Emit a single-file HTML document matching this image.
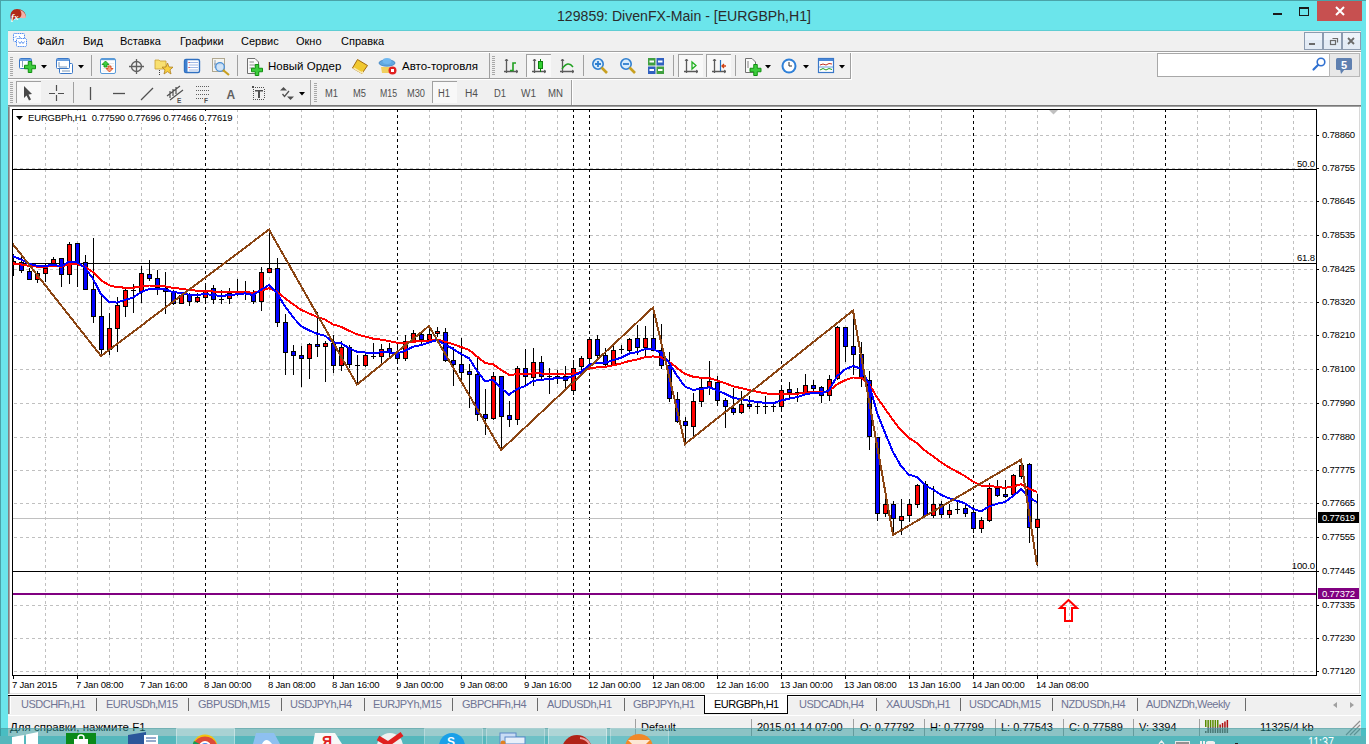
<!DOCTYPE html>
<html><head><meta charset="utf-8">
<style>
*{margin:0;padding:0}
html,body{width:1369px;height:744px;overflow:hidden;background:#fff}
svg{position:absolute;left:0;top:0;display:block}
text{white-space:pre}
</style></head><body>
<svg width="1369" height="744" viewBox="0 0 1369 744" font-family="Liberation Sans, sans-serif">
<rect x="0" y="0" width="1366" height="744" fill="#6be5eb"/>
<rect x="0" y="0" width="1366" height="1" fill="#4aa3a8"/>
<rect x="0" y="0" width="1" height="744" fill="#4aa3a8"/>
<path d="M10.5 17 C10 12 13 9 17 9 C22 9 26 12 26 17 C24 18 21 17.5 18 18 C15 18.5 13 20 12 21 C11 20 10.6 18.5 10.5 17Z" fill="#b02a18"/>
<path d="M20 10 C23 11 26 13.5 26 17.5 C24.5 18.5 22 18 19.5 18 C22 16 22 13 20 10Z" fill="#f0b0a8"/>
<text x="11" y="20" font-size="9" font-style="italic" font-weight="bold" fill="#fff" font-family="Liberation Serif, serif">fx</text>
<text x="557" y="21" font-size="15.5" fill="#2b2b2b" textLength="254" lengthAdjust="spacingAndGlyphs">129859: DivenFX-Main - [EURGBPh,H1]</text>
<rect x="1273" y="13" width="9" height="2" fill="#1a1a1a"/>
<rect x="1299.5" y="7.5" width="9" height="8" fill="none" stroke="#1a1a1a" stroke-width="1"/><rect x="1299" y="7" width="10" height="2" fill="#1a1a1a"/>
<rect x="1317" y="1" width="45" height="20" fill="#c75050"/>
<path d="M1336 7 L1344 15 M1344 7 L1336 15" stroke="#fff" stroke-width="2"/>
<rect x="8" y="31" width="1353" height="20" fill="#f0f0f0"/>
<rect x="8" y="30" width="1353" height="1" fill="#5fcdd3"/>
<g fill="#fff" stroke="#4a88f0" stroke-width="1" stroke-dasharray="1.2 0.6"><rect x="13.5" y="33.5" width="11" height="8" rx="1"/><rect x="16.5" y="38.5" width="10" height="8" rx="1"/></g>
<path d="M15 37.5 l1.5 -1.5 M19 36 l1.5 2 M18.5 41.5 l1.5 2 l1.5 -2 l1.5 2 l1.5 -2" stroke="#4a88f0" fill="none" stroke-width="0.9"/>
<g font-size="11" fill="#000">
<text x="37" y="45">Файл</text>
<text x="83" y="45">Вид</text>
<text x="120" y="45">Вставка</text>
<text x="180" y="45">Графики</text>
<text x="241" y="45">Сервис</text>
<text x="296" y="45">Окно</text>
<text x="341" y="45">Справка</text>
</g>
<rect x="1304.5" y="32.5" width="18" height="17" fill="#e3ebf5" stroke="#8c9bb0" stroke-width="1"/>
<rect x="1305" y="33" width="17" height="7" fill="#eef3fa"/>
<rect x="1323.5" y="32.5" width="18" height="17" fill="#e3ebf5" stroke="#8c9bb0" stroke-width="1"/>
<rect x="1324" y="33" width="17" height="7" fill="#eef3fa"/>
<rect x="1342.5" y="32.5" width="18" height="17" fill="#e3ebf5" stroke="#8c9bb0" stroke-width="1"/>
<rect x="1343" y="33" width="17" height="7" fill="#eef3fa"/>
<rect x="1309" y="43" width="6" height="2" fill="#6a6a6a"/>
<rect x="1330.5" y="40.5" width="5" height="4" fill="none" stroke="#6a6a6a" stroke-width="1.2"/><path d="M1332.5 38.5 H1337.5 V42.5" fill="none" stroke="#6a6a6a" stroke-width="1.2"/>
<path d="M1348 38 L1354 44 M1354 38 L1348 44" stroke="#6a6a6a" stroke-width="1.8"/>
<rect x="8" y="51" width="1353" height="1" fill="#a0a0a0"/>
<rect x="8" y="52" width="1353" height="53" fill="#f0f0f0"/>
<rect x="8" y="52" width="1353" height="1" fill="#ffffff"/>
<rect x="8" y="78" width="843" height="1" fill="#a0a0a0"/>
<rect x="8" y="79" width="844" height="1" fill="#ffffff"/>
<rect x="851" y="53" width="1" height="26" fill="#ffffff"/>
<rect x="489" y="53" width="1" height="25" fill="#a0a0a0"/>
<rect x="850" y="53" width="1" height="25" fill="#a0a0a0"/>
<rect x="310" y="80" width="1" height="25" fill="#a0a0a0"/>
<rect x="571" y="80" width="1" height="25" fill="#a0a0a0"/><rect x="572" y="80" width="1" height="25" fill="#fff"/>
<rect x="8" y="105" width="1353" height="1" fill="#787878"/>
<rect x="8" y="106" width="1353" height="1" fill="#a0a0a0"/>
<rect x="8" y="107" width="1353" height="588" fill="#fff"/>
<rect x="8" y="107" width="1" height="587" fill="#808080"/><rect x="9" y="107" width="1" height="587" fill="#a8a8a8"/>
<rect x="1359" y="107" width="1" height="588" fill="#d8d8d8"/>
<rect x="10" y="57" width="3" height="1" fill="#a8a8a8"/><rect x="10" y="59" width="3" height="1" fill="#a8a8a8"/><rect x="10" y="61" width="3" height="1" fill="#a8a8a8"/><rect x="10" y="63" width="3" height="1" fill="#a8a8a8"/><rect x="10" y="65" width="3" height="1" fill="#a8a8a8"/><rect x="10" y="67" width="3" height="1" fill="#a8a8a8"/><rect x="10" y="69" width="3" height="1" fill="#a8a8a8"/><rect x="10" y="71" width="3" height="1" fill="#a8a8a8"/><rect x="10" y="73" width="3" height="1" fill="#a8a8a8"/><rect x="10" y="75" width="3" height="1" fill="#a8a8a8"/>
<rect x="19.5" y="58.5" width="12" height="10" rx="1" fill="#fff" stroke="#3a78c8" stroke-width="1"/><rect x="20" y="59" width="11" height="2" fill="#6aa0e0"/>
<path d="M22.5 61 V67" stroke="#8aa0b8" stroke-width="1"/>
<path d="M28.25 61.5 H31.75 V65.25 H35.5 V68.75 H31.75 V72.5 H28.25 V68.75 H24.5 V65.25 H28.25 Z" fill="#3ccc3c" stroke="#109010" stroke-width="1"/>
<path d="M41 65 H47 L44 68.5 Z" fill="#000"/>
<rect x="59.5" y="63.5" width="13" height="10" rx="1" fill="#fff" stroke="#3a78c8" stroke-width="1"/>
<rect x="56.5" y="58.5" width="13" height="10" rx="1" fill="#fff" stroke="#3a78c8" stroke-width="1"/><rect x="57" y="59" width="12" height="2" fill="#6aa0e0"/>
<path d="M59 62 V67 H67 M62 71 H70" stroke="#7a98b8" stroke-width="1" fill="none"/>
<path d="M78 65 H84 L81 68.5 Z" fill="#000"/>
<rect x="91" y="55" width="1" height="21" fill="#a0a0a0"/>
<rect x="100.5" y="58.5" width="15" height="15" rx="1.5" fill="#fff" stroke="#5a9ad8" stroke-width="1"/><rect x="101" y="59" width="14" height="1.2" fill="#5a9ad8"/>
<path d="M102.5 63.5 H114 M102.5 66 H114 M102.5 68.5 H108 M102.5 71 H108" stroke="#e4e4e4" stroke-width="0.8"/>
<path d="M102 64.5 L105.5 61 L109 64.5 H107 V67 H104 V64.5 Z" fill="#40d040" stroke="#109010" stroke-width="0.8"/>
<path d="M106 68.5 L109.5 72 L113 68.5 H111 V66 H108 V68.5 Z" fill="#f8a080" stroke="#d04010" stroke-width="0.8"/>
<circle cx="136.5" cy="66.5" r="5" fill="none" stroke="#606060" stroke-width="1.3"/><path d="M136.5 59 V74 M129 66.5 H144" stroke="#606060" stroke-width="1.3"/>
<path d="M155 60 H159 L160 61 H166 V69 H155 Z" fill="#f8e070" stroke="#c8a030" stroke-width="0.8"/>
<path d="M167.5 63 L169 67 L173 67.2 L170 69.8 L171 74 L167.5 71.6 L164 74 L165 69.8 L162 67.2 L166 67 Z" fill="#f8d040" stroke="#b08020" stroke-width="0.8"/>
<path d="M159.5 70 V75" stroke="#404040" stroke-width="1" stroke-dasharray="1 1"/>
<rect x="184.5" y="59.5" width="15" height="13" rx="1.5" fill="#fff" stroke="#3070c0" stroke-width="1.4"/><rect x="185" y="60" width="2.5" height="12" fill="#4080d0"/>
<path d="M189 62.5 H198 M189 65 H198 M189 67.5 H198 M189 70 H198" stroke="#8aa8e0" stroke-width="0.8"/>
<path d="M188.5 62.5 h1 M188.5 67.5 h1" stroke="#e02020" stroke-width="1"/>
<rect x="212.5" y="58.5" width="12" height="13" fill="#f4f4f0" stroke="#b0a890" stroke-width="1"/>
<path d="M215 60 V68 M214 64 H223" stroke="#8090a0" stroke-width="0.8"/>
<circle cx="220" cy="67" r="4.3" fill="#c8e0f8" fill-opacity="0.8" stroke="#4a90d8" stroke-width="1.3"/><path d="M223 70 L229 75" stroke="#c8a020" stroke-width="2.2"/>
<rect x="237" y="55" width="1" height="21" fill="#a0a0a0"/>
<path d="M247.5 58.5 H255 L258.5 62 V73.5 H247.5 Z" fill="#fafafa" stroke="#707070" stroke-width="1"/>
<path d="M249.5 62 H254 M249.5 65 H256 M249.5 68 H254" stroke="#909090" stroke-width="1"/>
<path d="M255.25 64.5 H258.75 V68.25 H262.5 V71.75 H258.75 V75.5 H255.25 V71.75 H251.5 V68.25 H255.25 Z" fill="#3ccc3c" stroke="#109010" stroke-width="1"/>
<text x="268" y="70" font-size="11.5" fill="#000">Новый Ордер</text>
<path d="M357.5 59.5 L367.5 65.5 L362 73.5 L352.5 68 Z" fill="#f0c830" stroke="#a06810" stroke-width="1"/>
<path d="M353.5 68 L362 73 L363 71.5" fill="none" stroke="#f8e8b0" stroke-width="1.5"/>
<path d="M381 67 L394 67 L393 73 L382 73 Z" fill="#f0d060"/>
<ellipse cx="387" cy="63" rx="8" ry="3.2" fill="#60a8e0" stroke="#3a80c0" stroke-width="0.8"/><ellipse cx="387" cy="61" rx="4.5" ry="3" fill="#70b8f0"/>
<circle cx="392.5" cy="70.5" r="4" fill="#e02020"/><rect x="391" y="69" width="3" height="3" fill="#fff"/>
<text x="402" y="70" font-size="11.5" fill="#000">Авто-торговля</text>
<rect x="492" y="56" width="3" height="1" fill="#a8a8a8"/><rect x="492" y="58" width="3" height="1" fill="#a8a8a8"/><rect x="492" y="60" width="3" height="1" fill="#a8a8a8"/><rect x="492" y="62" width="3" height="1" fill="#a8a8a8"/><rect x="492" y="64" width="3" height="1" fill="#a8a8a8"/><rect x="492" y="66" width="3" height="1" fill="#a8a8a8"/><rect x="492" y="68" width="3" height="1" fill="#a8a8a8"/><rect x="492" y="70" width="3" height="1" fill="#a8a8a8"/><rect x="492" y="72" width="3" height="1" fill="#a8a8a8"/><rect x="492" y="74" width="3" height="1" fill="#a8a8a8"/>
<path d="M506.5 59 V73 M504 71.5 H518" stroke="#5a5a5a" stroke-width="1.3" fill="none"/><path d="M505 61 L506.5 59 L508 61 M516 70 L518 71.5 L516 73" stroke="#5a5a5a" stroke-width="1" fill="none"/>
<path d="M510 70.5 H513 V63 H516" stroke="#20a020" stroke-width="1.6" fill="none"/>
<rect x="526" y="54" width="25" height="23" fill="#f8f8f8"/><rect x="526" y="54" width="25" height="1" fill="#a0a0a0"/><rect x="526" y="54" width="1" height="23" fill="#a0a0a0"/>
<path d="M534.5 59 V73 M532 71.5 H546" stroke="#5a5a5a" stroke-width="1.3" fill="none"/><path d="M533 61 L534.5 59 L536 61 M544 70 L546 71.5 L544 73" stroke="#5a5a5a" stroke-width="1" fill="none"/>
<path d="M540.5 59 V72" stroke="#108010" stroke-width="1"/><rect x="538.5" y="61.5" width="4" height="7" fill="#30d030" stroke="#108010" stroke-width="1"/>
<path d="M562.5 59 V73 M560 71.5 H574" stroke="#5a5a5a" stroke-width="1.3" fill="none"/><path d="M561 61 L562.5 59 L564 61 M572 70 L574 71.5 L572 73" stroke="#5a5a5a" stroke-width="1" fill="none"/>
<path d="M562 69 Q568 60 573 67" stroke="#20a020" stroke-width="1.4" fill="none"/>
<rect x="583" y="55" width="1" height="21" fill="#a0a0a0"/>
<circle cx="598" cy="64" r="5.2" fill="#d8ecfb" stroke="#2f7fd0" stroke-width="1.6"/><path d="M601.5 67.5 L607 73" stroke="#c8a020" stroke-width="2.6"/><path d="M595 64 H601 M598 61 V67" stroke="#2f7fd0" stroke-width="1.8"/>
<circle cx="626" cy="64" r="5.2" fill="#d8ecfb" stroke="#2f7fd0" stroke-width="1.6"/><path d="M629.5 67.5 L635 73" stroke="#c8a020" stroke-width="2.6"/><path d="M623 64 H629" stroke="#2f7fd0" stroke-width="1.8"/>
<rect x="648" y="58" width="7.5" height="7.5" fill="#40a040"/><rect x="656.5" y="58" width="7.5" height="7.5" fill="#3060c0"/><rect x="648" y="66.5" width="7.5" height="7.5" fill="#3060c0"/><rect x="656.5" y="66.5" width="7.5" height="7.5" fill="#40a040"/>
<path d="M649.5 61.5 h4.5 M658 61.5 h4.5 M649.5 70 h4.5 M658 70 h4.5" stroke="#fff" stroke-width="2"/>
<rect x="673" y="55" width="1" height="21" fill="#a0a0a0"/>
<rect x="678" y="54" width="25" height="23" fill="#f8f8f8"/><rect x="678" y="54" width="25" height="1" fill="#a0a0a0"/><rect x="678" y="54" width="1" height="23" fill="#a0a0a0"/>
<path d="M686.5 59 V73 M684 71.5 H698" stroke="#5a5a5a" stroke-width="1.3" fill="none"/><path d="M685 61 L686.5 59 L688 61 M696 70 L698 71.5 L696 73" stroke="#5a5a5a" stroke-width="1" fill="none"/>
<path d="M692 62 L696 65.5 L692 69 Z" fill="none" stroke="#20b020" stroke-width="1.3"/>
<rect x="706" y="54" width="25" height="23" fill="#f8f8f8"/><rect x="706" y="54" width="25" height="1" fill="#a0a0a0"/><rect x="706" y="54" width="1" height="23" fill="#a0a0a0"/>
<path d="M714.5 59 V73 M712 71.5 H726" stroke="#5a5a5a" stroke-width="1.3" fill="none"/><path d="M713 61 L714.5 59 L716 61 M724 70 L726 71.5 L724 73" stroke="#5a5a5a" stroke-width="1" fill="none"/>
<path d="M720.5 60 V71" stroke="#2070c0" stroke-width="1.2"/><path d="M726 66 H722 M724 64 L722 66 L724 68" stroke="#d04010" stroke-width="1.3" fill="none"/>
<rect x="735" y="55" width="1" height="21" fill="#a0a0a0"/>
<path d="M745.5 58.5 H752 L755.5 62 V72.5 H745.5 Z" fill="#fafafa" stroke="#707070" stroke-width="1"/>
<path d="M748 61 V68" stroke="#606060" stroke-width="0.8"/>
<path d="M753.75 64.5 H757.25 V68.25 H761.0 V71.75 H757.25 V75.5 H753.75 V71.75 H750.0 V68.25 H753.75 Z" fill="#3ccc3c" stroke="#109010" stroke-width="1"/>
<path d="M765 65 H771 L768 68.5 Z" fill="#000"/>
<circle cx="789" cy="66" r="7.5" fill="#2f80d8"/><circle cx="789" cy="66" r="5.5" fill="#fff"/><path d="M789 62 V66 H792" stroke="#303030" stroke-width="1" fill="none"/>
<path d="M803 65 H809 L806 68.5 Z" fill="#000"/>
<rect x="818.5" y="58.5" width="15" height="14" fill="#fff" stroke="#3a78c8" stroke-width="1.2"/><rect x="819" y="59" width="14" height="2" fill="#4a88d8"/>
<path d="M820 65 l3 -1 l3 1 l3 -1.5 l3 0.5" stroke="#c03020" stroke-width="1" fill="none"/><path d="M820 70 l3 -1.5 l3 1.5 l3 -1.5 l3 1" stroke="#20a020" stroke-width="1" fill="none"/><path d="M819 67 H833" stroke="#4a88d8" stroke-width="0.8"/>
<path d="M839 65 H845 L842 68.5 Z" fill="#000"/>
<rect x="10" y="82" width="3" height="1" fill="#a8a8a8"/><rect x="10" y="84" width="3" height="1" fill="#a8a8a8"/><rect x="10" y="86" width="3" height="1" fill="#a8a8a8"/><rect x="10" y="88" width="3" height="1" fill="#a8a8a8"/><rect x="10" y="90" width="3" height="1" fill="#a8a8a8"/><rect x="10" y="92" width="3" height="1" fill="#a8a8a8"/><rect x="10" y="94" width="3" height="1" fill="#a8a8a8"/><rect x="10" y="96" width="3" height="1" fill="#a8a8a8"/><rect x="10" y="98" width="3" height="1" fill="#a8a8a8"/><rect x="10" y="100" width="3" height="1" fill="#a8a8a8"/><rect x="10" y="102" width="3" height="1" fill="#a8a8a8"/>
<rect x="16" y="81" width="25" height="22" fill="#f8f8f8"/><rect x="16" y="81" width="25" height="1" fill="#a0a0a0"/><rect x="16" y="81" width="1" height="22" fill="#a0a0a0"/>
<path d="M24 86 L32 94 L28.5 94.5 L31 99.5 L29 100.5 L26.5 95.5 L24 98 Z" fill="#484848"/>
<path d="M56.5 85 V91 M56.5 95 V101 M49 93.5 H55 M58 93.5 H64" stroke="#505050" stroke-width="1.2"/>
<rect x="73" y="82" width="1" height="21" fill="#a0a0a0"/>
<path d="M90.5 87 V100" stroke="#505050" stroke-width="1.3"/>
<path d="M113 93.5 H125" stroke="#505050" stroke-width="1.3"/>
<path d="M141 100 L153 88" stroke="#505050" stroke-width="1.3"/>
<path d="M167 96 L180 86 M170 100 L183 90 M170 91 V98 M173 89 V96 M176 87 V94" stroke="#505050" stroke-width="1.2"/>
<text x="177" y="103" font-size="6.5" font-weight="bold" fill="#505050">E</text>
<path d="M196 86.5 H210 M196 90.5 H210 M196 94.5 H210 M196 98.5 H203" stroke="#606060" stroke-width="1" stroke-dasharray="1 1"/>
<text x="204" y="103" font-size="6.5" font-weight="bold" fill="#505050">F</text>
<text x="226.5" y="98.5" font-size="12" font-weight="bold" fill="#606060">A</text>
<g fill="#505050"><rect x="253" y="87" width="1" height="1"/><rect x="253" y="99" width="1" height="1"/><rect x="255" y="87" width="1" height="1"/><rect x="255" y="99" width="1" height="1"/><rect x="257" y="87" width="1" height="1"/><rect x="257" y="99" width="1" height="1"/><rect x="259" y="87" width="1" height="1"/><rect x="259" y="99" width="1" height="1"/><rect x="261" y="87" width="1" height="1"/><rect x="261" y="99" width="1" height="1"/><rect x="263" y="87" width="1" height="1"/><rect x="263" y="99" width="1" height="1"/><rect x="253" y="89" width="1" height="1"/><rect x="264" y="89" width="1" height="1"/><rect x="253" y="91" width="1" height="1"/><rect x="264" y="91" width="1" height="1"/><rect x="253" y="93" width="1" height="1"/><rect x="264" y="93" width="1" height="1"/><rect x="253" y="95" width="1" height="1"/><rect x="264" y="95" width="1" height="1"/><rect x="253" y="97" width="1" height="1"/><rect x="264" y="97" width="1" height="1"/><rect x="252" y="86" width="2" height="2"/><rect x="255" y="90" width="8" height="1.5"/><rect x="258" y="90" width="2" height="8"/></g>
<path d="M280 90.5 L283.5 87 L287 90.5 Z M287 96.5 L290.5 100 L294 96.5 Z" fill="#505050"/><path d="M282.5 94 L284.5 96.5 L289 91" stroke="#505050" stroke-width="1.3" fill="none"/>
<path d="M299 92 H305 L302 95.5 Z" fill="#000"/>
<rect x="314" y="83" width="3" height="1" fill="#a8a8a8"/><rect x="314" y="85" width="3" height="1" fill="#a8a8a8"/><rect x="314" y="87" width="3" height="1" fill="#a8a8a8"/><rect x="314" y="89" width="3" height="1" fill="#a8a8a8"/><rect x="314" y="91" width="3" height="1" fill="#a8a8a8"/><rect x="314" y="93" width="3" height="1" fill="#a8a8a8"/><rect x="314" y="95" width="3" height="1" fill="#a8a8a8"/><rect x="314" y="97" width="3" height="1" fill="#a8a8a8"/><rect x="314" y="99" width="3" height="1" fill="#a8a8a8"/><rect x="314" y="101" width="3" height="1" fill="#a8a8a8"/>
<g font-size="10" fill="#505050">
<rect x="432" y="81" width="25" height="22" fill="#f8f8f8"/><rect x="432" y="81" width="25" height="1" fill="#a0a0a0"/><rect x="432" y="81" width="1" height="22" fill="#a0a0a0"/>
<text x="325" y="97" textLength="13" lengthAdjust="spacingAndGlyphs">M1</text>
<text x="353" y="97" textLength="13" lengthAdjust="spacingAndGlyphs">M5</text>
<text x="380" y="97" textLength="17" lengthAdjust="spacingAndGlyphs">M15</text>
<text x="407" y="97" textLength="18" lengthAdjust="spacingAndGlyphs">M30</text>
<text x="438" y="97" textLength="12" lengthAdjust="spacingAndGlyphs">H1</text>
<text x="465" y="97" textLength="13" lengthAdjust="spacingAndGlyphs">H4</text>
<text x="494" y="97" textLength="12" lengthAdjust="spacingAndGlyphs">D1</text>
<text x="521" y="97" textLength="15" lengthAdjust="spacingAndGlyphs">W1</text>
<text x="548" y="97" textLength="15" lengthAdjust="spacingAndGlyphs">MN</text>
</g>
<rect x="1157.5" y="53.5" width="172" height="23" fill="#fff" stroke="#a8a8a8" stroke-width="1"/>
<circle cx="1321" cy="62" r="3.8" fill="none" stroke="#3070d0" stroke-width="1.6"/><path d="M1318 65 L1313.5 69.5" stroke="#3070d0" stroke-width="2.2" stroke-linecap="round"/>
<rect x="1329.5" y="53.5" width="30" height="23" fill="#e8e8e8" stroke="#b8b8b8" stroke-width="1"/>
<rect x="1336" y="58" width="16" height="12" rx="1.5" fill="#5f80b0"/><path d="M1340 69 L1341 74 L1345 69 Z" fill="#5f80b0"/>
<text x="1341" y="68.5" font-size="11" font-weight="bold" fill="#fff">5</text>
<g shape-rendering="crispEdges">
<path d="M45.5 109V675 M77.5 109V675 M109.5 109V675 M141.5 109V675 M173.5 109V675 M237.5 109V675 M269.5 109V675 M301.5 109V675 M333.5 109V675 M365.5 109V675 M429.5 109V675 M461.5 109V675 M493.5 109V675 M525.5 109V675 M557.5 109V675 M621.5 109V675 M653.5 109V675 M685.5 109V675 M717.5 109V675 M749.5 109V675 M813.5 109V675 M845.5 109V675 M877.5 109V675 M909.5 109V675 M941.5 109V675 M1005.5 109V675 M1037.5 109V675 M1069.5 109V675 M1101.5 109V675 M1133.5 109V675 M1197.5 109V675 M1229.5 109V675 M1261.5 109V675 M1293.5 109V675 M14 135.5H1316 M14 168.5H1316 M14 201.5H1316 M14 235.5H1316 M14 269.5H1316 M14 302.5H1316 M14 335.5H1316 M14 369.5H1316 M14 403.5H1316 M14 437.5H1316 M14 470.5H1316 M14 503.5H1316 M14 537.5H1316 M14 571.5H1316 M14 605.5H1316 M14 638.5H1316 M14 671.5H1316" stroke="#c0c0c0" stroke-width="1" stroke-dasharray="3 3" fill="none"/>
<path d="M205.5 109V675 M397.5 109V675 M573.5 109V675 M589.5 109V675 M781.5 109V675 M973.5 109V675 M1165.5 109V675" stroke="#000" stroke-width="1" stroke-dasharray="3 3" fill="none"/>
<path d="M12 169.5H1316 M12 263.5H1316 M12 571.5H1316" stroke="#000" stroke-width="1"/>
<path d="M12 518.5H1316" stroke="#c0c0c0" stroke-width="1"/>
<rect x="12" y="593" width="1304" height="2" fill="#800080"/>
</g>
<g font-size="9.5" fill="#000" text-anchor="end" style="letter-spacing:-0.1px">
<text x="1315" y="167">50.0</text><text x="1315" y="261">61.8</text><text x="1315" y="569">100.0</text>
</g>
<defs><clipPath id="pc"><rect x="13" y="110" width="1303" height="565"/></clipPath></defs>
<g clip-path="url(#pc)">
<g shape-rendering="crispEdges">
<path d="M13.5 254V261 M13.5 265V276 M21.5 256V262 M21.5 271V273 M29.5 268V271 M37.5 271V273 M37.5 280V283 M45.5 263V268 M45.5 274V282 M53.5 257V259 M53.5 264V265 M61.5 275V287 M69.5 242V244 M69.5 275V284 M77.5 264V287 M85.5 255V262 M93.5 238V289 M93.5 317V323 M101.5 296V316 M101.5 350V355 M109.5 313V328 M109.5 350V355 M117.5 297V305 M117.5 329V352 M125.5 287V290 M125.5 307V317 M133.5 284V290 M133.5 291V313 M141.5 266V273 M141.5 292V303 M149.5 260V274 M149.5 279V281 M157.5 270V278 M157.5 288V295 M165.5 272V288 M165.5 292V314 M173.5 290V291 M173.5 304V305 M189.5 293V295 M189.5 302V306 M197.5 293V297 M197.5 302V303 M205.5 283V290 M205.5 298V302 M213.5 285V288 M213.5 300V304 M221.5 290V299 M221.5 300V304 M229.5 288V293 M229.5 299V304 M237.5 279V291 M237.5 292V296 M245.5 281V291 M245.5 292V300 M253.5 290V293 M253.5 302V304 M261.5 267V272 M261.5 302V311 M269.5 230V268 M277.5 258V268 M277.5 323V327 M285.5 314V322 M285.5 353V375 M293.5 345V351 M293.5 356V375 M301.5 346V355 M301.5 359V387 M309.5 343V344 M309.5 359V379 M317.5 312V344 M317.5 347V357 M325.5 341V343 M325.5 347V382 M333.5 335V343 M333.5 366V373 M341.5 341V347 M341.5 366V371 M349.5 345V347 M349.5 365V368 M357.5 355V365 M357.5 366V385 M365.5 352V355 M365.5 366V367 M373.5 343V356 M373.5 357V359 M381.5 344V349 M381.5 357V365 M389.5 343V348 M389.5 353V358 M397.5 345V352 M397.5 359V364 M405.5 335V341 M405.5 359V361 M413.5 330V333 M413.5 342V343 M421.5 333V334 M421.5 340V344 M429.5 329V334 M429.5 340V343 M437.5 327V331 M437.5 334V337 M445.5 328V332 M445.5 361V362 M453.5 347V360 M453.5 365V386 M461.5 338V364 M461.5 373V381 M469.5 364V371 M469.5 375V408 M477.5 358V374 M477.5 415V421 M485.5 389V414 M485.5 419V435 M493.5 372V376 M493.5 419V420 M501.5 417V451 M509.5 401V415 M509.5 420V427 M517.5 366V368 M517.5 420V425 M525.5 349V368 M525.5 377V386 M533.5 348V362 M533.5 378V386 M541.5 356V362 M541.5 377V380 M549.5 368V376 M549.5 377V394 M557.5 370V376 M557.5 377V384 M565.5 366V376 M565.5 381V390 M573.5 360V368 M573.5 391V395 M581.5 356V358 M581.5 367V371 M589.5 337V339 M589.5 359V365 M597.5 335V339 M597.5 356V359 M605.5 348V355 M605.5 365V367 M613.5 346V350 M621.5 345V349 M621.5 350V354 M629.5 338V339 M629.5 351V352 M637.5 325V338 M637.5 348V355 M645.5 326V338 M645.5 348V356 M653.5 308V338 M661.5 324V350 M661.5 366V369 M669.5 352V365 M669.5 399V402 M677.5 392V399 M677.5 422V423 M685.5 417V421 M685.5 426V445 M693.5 393V401 M693.5 427V437 M701.5 379V387 M701.5 402V407 M709.5 361V381 M709.5 388V395 M717.5 376V382 M717.5 401V406 M725.5 398V400 M725.5 407V428 M733.5 388V408 M733.5 413V415 M741.5 391V404 M741.5 413V414 M749.5 396V404 M749.5 407V409 M757.5 403V406 M757.5 407V414 M765.5 396V406 M765.5 407V414 M773.5 403V406 M773.5 407V412 M781.5 386V390 M781.5 407V409 M789.5 382V389 M789.5 393V398 M797.5 388V392 M797.5 393V402 M805.5 374V385 M805.5 393V394 M813.5 380V385 M813.5 389V392 M821.5 386V387 M821.5 396V403 M829.5 375V379 M829.5 396V401 M837.5 326V327 M837.5 379V380 M845.5 347V362 M853.5 311V346 M853.5 355V375 M861.5 342V354 M861.5 379V387 M869.5 371V380 M869.5 437V450 M877.5 514V521 M885.5 497V504 M885.5 514V517 M893.5 501V504 M893.5 519V536 M901.5 499V516 M901.5 521V535 M909.5 499V504 M909.5 516V522 M917.5 484V485 M917.5 505V508 M925.5 481V484 M925.5 516V517 M933.5 486V504 M933.5 516V518 M941.5 501V504 M941.5 515V518 M949.5 504V510 M949.5 515V518 M957.5 502V509 M957.5 510V514 M965.5 504V508 M965.5 514V517 M973.5 506V512 M973.5 529V533 M981.5 517V520 M981.5 529V533 M989.5 483V488 M989.5 521V522 M997.5 480V488 M997.5 496V497 M1005.5 480V494 M1005.5 497V498 M1013.5 474V475 M1013.5 495V496 M1021.5 460V465 M1021.5 477V479 M1029.5 463V464 M1029.5 528V543 M1037.5 494V519 M1037.5 528V566 M131 290.5H136 M219 299.5H224 M235 291.5H240 M243 291.5H248 M355 365.5H360 M371 356.5H376 M547 376.5H552 M555 376.5H560 M619 349.5H624 M755 406.5H760 M763 406.5H768 M771 406.5H776 M795 392.5H800 M955 509.5H960" stroke="#000" stroke-width="1" fill="none"/>
<g fill="#ff0000" stroke="#000" stroke-width="1"><rect x="11.5" y="261.5" width="4" height="3" /><rect x="35.5" y="273.5" width="4" height="6" /><rect x="43.5" y="268.5" width="4" height="5" /><rect x="51.5" y="259.5" width="4" height="4" /><rect x="67.5" y="244.5" width="4" height="30" /><rect x="107.5" y="328.5" width="4" height="21" /><rect x="115.5" y="305.5" width="4" height="23" /><rect x="123.5" y="290.5" width="4" height="16" /><rect x="139.5" y="273.5" width="4" height="18" /><rect x="179.5" y="295.5" width="4" height="8" /><rect x="195.5" y="297.5" width="4" height="4" /><rect x="203.5" y="290.5" width="4" height="7" /><rect x="227.5" y="293.5" width="4" height="5" /><rect x="259.5" y="272.5" width="4" height="29" /><rect x="267.5" y="268.5" width="4" height="4" /><rect x="307.5" y="344.5" width="4" height="14" /><rect x="323.5" y="343.5" width="4" height="3" /><rect x="339.5" y="347.5" width="4" height="18" /><rect x="363.5" y="355.5" width="4" height="10" /><rect x="379.5" y="349.5" width="4" height="7" /><rect x="403.5" y="341.5" width="4" height="17" /><rect x="411.5" y="333.5" width="4" height="8" /><rect x="427.5" y="334.5" width="4" height="5" /><rect x="435.5" y="331.5" width="4" height="2" /><rect x="491.5" y="376.5" width="4" height="42" /><rect x="515.5" y="368.5" width="4" height="51" /><rect x="531.5" y="362.5" width="4" height="15" /><rect x="571.5" y="368.5" width="4" height="22" /><rect x="579.5" y="358.5" width="4" height="8" /><rect x="587.5" y="339.5" width="4" height="19" /><rect x="611.5" y="350.5" width="4" height="14" /><rect x="627.5" y="339.5" width="4" height="11" /><rect x="643.5" y="338.5" width="4" height="9" /><rect x="691.5" y="401.5" width="4" height="25" /><rect x="699.5" y="387.5" width="4" height="14" /><rect x="707.5" y="381.5" width="4" height="6" /><rect x="739.5" y="404.5" width="4" height="8" /><rect x="779.5" y="390.5" width="4" height="16" /><rect x="803.5" y="385.5" width="4" height="7" /><rect x="827.5" y="379.5" width="4" height="16" /><rect x="835.5" y="327.5" width="4" height="51" /><rect x="883.5" y="504.5" width="4" height="9" /><rect x="899.5" y="516.5" width="4" height="4" /><rect x="907.5" y="504.5" width="4" height="11" /><rect x="915.5" y="485.5" width="4" height="19" /><rect x="931.5" y="504.5" width="4" height="11" /><rect x="947.5" y="510.5" width="4" height="4" /><rect x="979.5" y="520.5" width="4" height="8" /><rect x="987.5" y="488.5" width="4" height="32" /><rect x="1011.5" y="475.5" width="4" height="19" /><rect x="1019.5" y="465.5" width="4" height="11" /><rect x="1035.5" y="519.5" width="4" height="8" /></g>
<g fill="#0000ff" stroke="#000" stroke-width="1"><rect x="19.5" y="262.5" width="4" height="8" /><rect x="27.5" y="271.5" width="4" height="8" /><rect x="59.5" y="258.5" width="4" height="16" /><rect x="75.5" y="243.5" width="4" height="20" /><rect x="83.5" y="262.5" width="4" height="27" /><rect x="91.5" y="289.5" width="4" height="27" /><rect x="99.5" y="316.5" width="4" height="33" /><rect x="147.5" y="274.5" width="4" height="4" /><rect x="155.5" y="278.5" width="4" height="9" /><rect x="163.5" y="288.5" width="4" height="3" /><rect x="171.5" y="291.5" width="4" height="12" /><rect x="187.5" y="295.5" width="4" height="6" /><rect x="211.5" y="288.5" width="4" height="11" /><rect x="251.5" y="293.5" width="4" height="8" /><rect x="275.5" y="268.5" width="4" height="54" /><rect x="283.5" y="322.5" width="4" height="30" /><rect x="291.5" y="351.5" width="4" height="4" /><rect x="299.5" y="355.5" width="4" height="3" /><rect x="315.5" y="344.5" width="4" height="2" /><rect x="331.5" y="343.5" width="4" height="22" /><rect x="347.5" y="347.5" width="4" height="17" /><rect x="387.5" y="348.5" width="4" height="4" /><rect x="395.5" y="352.5" width="4" height="6" /><rect x="419.5" y="334.5" width="4" height="5" /><rect x="443.5" y="332.5" width="4" height="28" /><rect x="451.5" y="360.5" width="4" height="4" /><rect x="459.5" y="364.5" width="4" height="8" /><rect x="467.5" y="371.5" width="4" height="3" /><rect x="475.5" y="374.5" width="4" height="40" /><rect x="483.5" y="414.5" width="4" height="4" /><rect x="499.5" y="376.5" width="4" height="40" /><rect x="507.5" y="415.5" width="4" height="4" /><rect x="523.5" y="368.5" width="4" height="8" /><rect x="539.5" y="362.5" width="4" height="14" /><rect x="563.5" y="376.5" width="4" height="4" /><rect x="595.5" y="339.5" width="4" height="16" /><rect x="603.5" y="355.5" width="4" height="9" /><rect x="635.5" y="338.5" width="4" height="9" /><rect x="651.5" y="338.5" width="4" height="12" /><rect x="659.5" y="350.5" width="4" height="15" /><rect x="667.5" y="365.5" width="4" height="33" /><rect x="675.5" y="399.5" width="4" height="22" /><rect x="683.5" y="421.5" width="4" height="4" /><rect x="715.5" y="382.5" width="4" height="18" /><rect x="723.5" y="400.5" width="4" height="6" /><rect x="731.5" y="408.5" width="4" height="4" /><rect x="747.5" y="404.5" width="4" height="2" /><rect x="787.5" y="389.5" width="4" height="3" /><rect x="811.5" y="385.5" width="4" height="3" /><rect x="819.5" y="387.5" width="4" height="8" /><rect x="843.5" y="327.5" width="4" height="19" /><rect x="851.5" y="346.5" width="4" height="8" /><rect x="859.5" y="354.5" width="4" height="24" /><rect x="867.5" y="380.5" width="4" height="56" /><rect x="875.5" y="437.5" width="4" height="76" /><rect x="891.5" y="504.5" width="4" height="14" /><rect x="923.5" y="484.5" width="4" height="31" /><rect x="939.5" y="504.5" width="4" height="10" /><rect x="963.5" y="508.5" width="4" height="5" /><rect x="971.5" y="512.5" width="4" height="16" /><rect x="995.5" y="488.5" width="4" height="7" /><rect x="1003.5" y="494.5" width="4" height="2" /><rect x="1027.5" y="464.5" width="4" height="63" /></g>
</g>
<polyline points="13,263.7 21,264.4 29,265.9 37,266.6 45,266.8 53,265.9 61,266.7 69,264.3 77,264.2 85,266.9 93,272.1 101,280.2 109,285.2 117,287.3 125,287.6 133,287.8 141,286.3 149,285.5 157,285.6 165,286.2 173,288.0 181,288.7 189,290.0 197,290.7 205,290.6 213,291.5 221,292.2 229,292.3 237,292.1 245,292.0 253,292.9 261,290.7 269,288.2 277,291.8 285,298.2 293,304.2 301,309.8 309,313.4 317,316.9 325,319.6 333,324.4 341,326.8 349,330.7 357,334.3 365,336.5 373,338.6 381,339.7 389,341.0 397,342.8 405,342.6 413,341.6 421,341.3 429,340.5 437,339.5 445,341.7 453,344.1 461,347.0 469,349.8 477,356.5 485,363.0 493,364.3 501,369.8 509,374.9 517,374.3 525,374.4 533,373.2 541,373.5 549,373.7 557,373.9 565,374.6 573,373.8 581,372.2 589,368.7 597,367.3 605,367.0 613,365.2 621,363.6 629,361.0 637,359.5 645,357.2 653,356.4 661,357.3 669,361.6 677,367.9 685,373.9 693,376.7 701,377.8 709,378.1 717,380.4 725,383.2 733,386.2 741,388.1 749,390.0 757,391.7 765,393.2 773,394.5 781,394.0 789,393.9 797,393.7 805,392.7 813,392.2 821,392.5 829,391.1 837,384.4 845,380.3 853,377.5 861,377.6 869,383.8 877,397.4 885,408.7 893,420.2 901,430.3 909,438.1 917,443.1 925,450.6 933,456.2 941,462.3 949,467.3 957,471.7 965,476.1 973,481.5 981,485.6 989,485.9 997,486.9 1005,487.8 1013,486.5 1021,484.2 1029,488.7 1037,491.9" fill="none" stroke="#ff0000" stroke-width="2" stroke-linejoin="round" shape-rendering="crispEdges"/>
<polyline points="13,256.3 21,259.5 29,263.7 37,265.8 45,266.2 53,264.6 61,266.6 69,261.6 77,261.9 85,268.0 93,278.8 101,294.4 109,301.9 117,302.6 125,299.8 133,297.6 141,292.1 149,289.1 157,288.6 165,289.2 173,292.2 181,292.8 189,294.7 197,295.2 205,293.9 213,295.1 221,295.9 229,295.2 237,294.2 245,293.4 253,295.0 261,289.9 269,284.9 277,293.2 285,306.3 293,317.2 301,326.1 309,330.2 317,333.7 325,335.8 333,342.3 341,343.3 349,348.0 357,351.8 365,352.5 373,353.3 381,352.3 389,352.3 397,353.5 405,350.7 413,346.8 421,345.1 429,342.6 437,340.0 445,344.5 453,348.9 461,353.9 469,358.3 477,370.7 485,381.2 493,379.9 501,387.9 509,394.8 517,389.0 525,386.1 533,380.9 541,379.8 549,378.9 557,378.2 565,378.6 573,376.1 581,372.2 589,364.8 597,362.7 605,363.0 613,360.2 621,357.8 629,353.6 637,352.2 645,349.0 653,349.1 661,352.7 669,362.7 677,375.7 685,386.6 693,389.8 701,389.1 709,387.3 717,390.1 725,393.8 733,397.8 741,399.1 749,400.8 757,401.9 765,402.8 773,403.5 781,400.5 789,398.7 797,397.2 805,394.4 813,392.9 821,393.5 829,390.3 837,376.2 845,369.5 853,366.0 861,368.7 869,383.8 877,412.5 885,432.9 893,451.9 901,466.2 909,474.7 917,477.0 925,485.4 933,489.5 941,494.9 949,498.3 957,500.7 965,503.4 973,508.9 981,511.5 989,506.4 997,503.8 1005,502.1 1013,496.1 1021,489.2 1029,497.6 1037,502.2" fill="none" stroke="#0000ff" stroke-width="2" stroke-linejoin="round" shape-rendering="crispEdges"/>
<polyline points="12,243 101,356 269,229.6 357,384.6 429,326 501,450 653,307.5 685,444 853,310.6 893,535 1021,459.7 1037,565" fill="none" stroke="#8b4513" stroke-width="2" stroke-linejoin="miter" shape-rendering="crispEdges"/>
</g>
<path d="M1068.5 600 L1077 608 H1072 V621 H1065 V608 H1060 Z" fill="none" stroke="#ff0000" stroke-width="2"/>
<path d="M1049 110 H1058 L1053.5 114.5 Z" fill="#c0c0c0"/>
<rect x="12.5" y="109.5" width="1304" height="566" fill="none" stroke="#000" stroke-width="1" shape-rendering="crispEdges"/>
<path d="M1317 135.5H1319 M1317 168.5H1319 M1317 201.5H1319 M1317 235.5H1319 M1317 269.5H1319 M1317 302.5H1319 M1317 335.5H1319 M1317 369.5H1319 M1317 403.5H1319 M1317 437.5H1319 M1317 470.5H1319 M1317 503.5H1319 M1317 537.5H1319 M1317 571.5H1319 M1317 605.5H1319 M1317 638.5H1319 M1317 671.5H1319" stroke="#000" stroke-width="1" shape-rendering="crispEdges"/>
<g font-size="9.5" fill="#000" style="letter-spacing:-0.2px">
<text x="1322" y="138">0.78860</text>
<text x="1322" y="171">0.78755</text>
<text x="1322" y="204">0.78645</text>
<text x="1322" y="238">0.78535</text>
<text x="1322" y="272">0.78425</text>
<text x="1322" y="305">0.78320</text>
<text x="1322" y="338">0.78210</text>
<text x="1322" y="372">0.78100</text>
<text x="1322" y="406">0.77990</text>
<text x="1322" y="440">0.77880</text>
<text x="1322" y="473">0.77775</text>
<text x="1322" y="506">0.77665</text>
<text x="1322" y="540">0.77555</text>
<text x="1322" y="574">0.77445</text>
<text x="1322" y="608">0.77335</text>
<text x="1322" y="641">0.77230</text>
<text x="1322" y="674">0.77120</text>
</g>
<rect x="1318" y="512" width="41" height="11" fill="#000"/>
<text x="1322" y="521" font-size="9.5" fill="#fff" style="letter-spacing:-0.2px">0.77619</text>
<rect x="1318" y="588" width="41" height="11" fill="#800080"/>
<text x="1322" y="597" font-size="9.5" fill="#fff" style="letter-spacing:-0.2px">0.77372</text>
<path d="M13.5 676V679 M77.5 676V679 M141.5 676V679 M205.5 676V679 M269.5 676V679 M333.5 676V679 M397.5 676V679 M461.5 676V679 M525.5 676V679 M589.5 676V679 M653.5 676V679 M717.5 676V679 M781.5 676V679 M845.5 676V679 M909.5 676V679 M973.5 676V679 M1037.5 676V679" stroke="#000" stroke-width="1" shape-rendering="crispEdges"/>
<g font-size="9.5" fill="#000" style="letter-spacing:-0.2px">
<text x="12" y="688">7 Jan 2015</text>
<text x="76" y="688">7 Jan 08:00</text>
<text x="140" y="688">7 Jan 16:00</text>
<text x="204" y="688">8 Jan 00:00</text>
<text x="268" y="688">8 Jan 08:00</text>
<text x="332" y="688">8 Jan 16:00</text>
<text x="396" y="688">9 Jan 00:00</text>
<text x="460" y="688">9 Jan 08:00</text>
<text x="524" y="688">9 Jan 16:00</text>
<text x="588" y="688">12 Jan 00:00</text>
<text x="652" y="688">12 Jan 08:00</text>
<text x="716" y="688">12 Jan 16:00</text>
<text x="780" y="688">13 Jan 00:00</text>
<text x="844" y="688">13 Jan 08:00</text>
<text x="908" y="688">13 Jan 16:00</text>
<text x="972" y="688">14 Jan 00:00</text>
<text x="1036" y="688">14 Jan 08:00</text>
</g>
<rect x="13" y="111" width="222" height="12" fill="#fff"/>
<path d="M16 116 H23 L19.5 120 Z" fill="#000"/>
<text x="28" y="121" font-size="9.5" fill="#000" style="letter-spacing:-0.15px" xml:space="preserve">EURGBPh,H1  0.77590 0.77696 0.77466 0.77619</text>

<rect x="10" y="693" width="1349" height="1" fill="#e0e0e0"/>
<rect x="8" y="694" width="1353" height="1" fill="#fff"/>
<rect x="8" y="695" width="1353" height="1" fill="#000"/>
<rect x="8" y="696" width="1353" height="19" fill="#f0f0f0"/>
<rect x="8" y="696" width="1353" height="1" fill="#fff"/>
<rect x="8" y="696" width="1" height="18" fill="#808080"/><rect x="9" y="696" width="1" height="18" fill="#a8a8a8"/><rect x="10" y="697" width="1" height="17" fill="#fff"/>
<rect x="8" y="715" width="1353" height="1" fill="#fff"/>
<rect x="704" y="695" width="84" height="19" fill="#000"/><rect x="705" y="695" width="82" height="18" fill="#fff"/>
<g font-size="11" fill="#6f7494" style="letter-spacing:-0.5px">
<text x="21" y="708">USDCHFh,H1</text>
<text x="106" y="708">EURUSDh,M15</text>
<text x="198" y="708">GBPUSDh,M15</text>
<text x="290" y="708">USDJPYh,H4</text>
<text x="373" y="708">EURJPYh,M15</text>
<text x="462" y="708">GBPCHFh,H4</text>
<text x="547" y="708">AUDUSDh,H1</text>
<text x="633" y="708">GBPJPYh,H1</text>
<text x="799" y="708">USDCADh,H4</text>
<text x="886" y="708">XAUUSDh,H1</text>
<text x="969" y="708">USDCADh,M15</text>
<text x="1061" y="708">NZDUSDh,H4</text>
<text x="1146" y="708">AUDNZDh,Weekly</text>
</g>
<text x="714" y="708" font-size="11" fill="#000" style="letter-spacing:-0.5px">EURGBPh,H1</text>
<rect x="96" y="698" width="1" height="13" fill="#6a6a6a"/>
<rect x="188" y="698" width="1" height="13" fill="#6a6a6a"/>
<rect x="281" y="698" width="1" height="13" fill="#6a6a6a"/>
<rect x="364" y="698" width="1" height="13" fill="#6a6a6a"/>
<rect x="452" y="698" width="1" height="13" fill="#6a6a6a"/>
<rect x="537" y="698" width="1" height="13" fill="#6a6a6a"/>
<rect x="624" y="698" width="1" height="13" fill="#6a6a6a"/>
<rect x="876" y="698" width="1" height="13" fill="#6a6a6a"/>
<rect x="960" y="698" width="1" height="13" fill="#6a6a6a"/>
<rect x="1052" y="698" width="1" height="13" fill="#6a6a6a"/>
<rect x="1137" y="698" width="1" height="13" fill="#6a6a6a"/>
<rect x="1245" y="698" width="1" height="13" fill="#6a6a6a"/>
<path d="M1337 702 V708 L1333 705 Z M1350 702 V708 L1354 705 Z" fill="#a0a0a0"/>
<rect x="8" y="716" width="1353" height="20" fill="#f0f0f0"/>
<rect x="635" y="719" width="1" height="17" fill="#a0a0a0"/>
<rect x="751" y="719" width="1" height="17" fill="#a0a0a0"/>
<rect x="853" y="719" width="1" height="17" fill="#a0a0a0"/>
<rect x="924" y="719" width="1" height="17" fill="#a0a0a0"/>
<rect x="995" y="719" width="1" height="17" fill="#a0a0a0"/>
<rect x="1063" y="719" width="1" height="17" fill="#a0a0a0"/>
<rect x="1133" y="719" width="1" height="17" fill="#a0a0a0"/>
<rect x="1199" y="719" width="1" height="17" fill="#a0a0a0"/>
<g font-size="11" fill="#000">
<text x="10" y="731" font-size="11.5">Для справки, нажмите F1</text>
<text x="641" y="731">Default</text>
<text x="757" y="731">2015.01.14 07:00</text>
<text x="860" y="731">O: 0.77792</text>
<text x="930" y="731">H: 0.77799</text>
<text x="1001" y="731">L: 0.77543</text>
<text x="1069" y="731">C: 0.77589</text>
<text x="1139" y="731">V: 3394</text>
<text x="1260" y="731">11325/4 kb</text>
</g>
<rect x="1205.0" y="720" width="1.5" height="7" fill="#5a8a00"/><rect x="1205.0" y="731" width="1.5" height="2" fill="#6a5a50"/><rect x="1207.4" y="720" width="1.5" height="7" fill="#5a8a00"/><rect x="1207.4" y="727" width="1.5" height="6" fill="#6a5a50"/><rect x="1209.8" y="720" width="1.5" height="7" fill="#5a8a00"/><rect x="1209.8" y="727" width="1.5" height="6" fill="#6a5a50"/><rect x="1212.2" y="720" width="1.5" height="7" fill="#5a8a00"/><rect x="1212.2" y="727" width="1.5" height="6" fill="#6a5a50"/><rect x="1214.6" y="720" width="1.5" height="7" fill="#5a8a00"/><rect x="1214.6" y="727" width="1.5" height="6" fill="#6a5a50"/><rect x="1217.0" y="720" width="1.5" height="7" fill="#5a8a00"/><rect x="1217.0" y="727" width="1.5" height="6" fill="#6a5a50"/><rect x="1219.4" y="724.5" width="1.5" height="2.5" fill="#b01010"/><rect x="1219.4" y="727" width="1.5" height="6" fill="#6a5a50"/><rect x="1221.8" y="723.0" width="1.5" height="4.0" fill="#b01010"/><rect x="1221.8" y="727" width="1.5" height="6" fill="#6a5a50"/><rect x="1224.2" y="721.5" width="1.5" height="5.5" fill="#b01010"/><rect x="1224.2" y="727" width="1.5" height="6" fill="#6a5a50"/><rect x="1226.6" y="720.0" width="1.5" height="7.0" fill="#b01010"/><rect x="1226.6" y="727" width="1.5" height="6" fill="#6a5a50"/>
<path d="M1346 735 L1360 721 M1350 735 L1360 725 M1354 735 L1360 729" stroke="#909090" stroke-width="1.2"/>
<rect x="0" y="728" width="1369" height="8" fill="rgb(40,150,153)" fill-opacity="0.5"/>
<rect x="0" y="728" width="1366" height="1" fill="#5aa0a3" fill-opacity="0.5"/>
<rect x="0" y="736" width="1366" height="8" fill="#55b7bc"/>
<rect x="1366" y="0" width="3" height="744" fill="#fff"/>
<rect x="176.5" y="728.5" width="58" height="16" fill="#fff" fill-opacity="0.25" stroke="#fff" stroke-opacity="0.45" stroke-width="1"/>
<rect x="424.5" y="728.5" width="58" height="16" fill="#fff" fill-opacity="0.15" stroke="#fff" stroke-opacity="0.35" stroke-width="1"/>
<rect x="486.5" y="728.5" width="58" height="16" fill="#fff" fill-opacity="0.15" stroke="#fff" stroke-opacity="0.35" stroke-width="1"/>
<rect x="548.5" y="728.5" width="58" height="16" fill="#fff" fill-opacity="0.3" stroke="#fff" stroke-opacity="0.5" stroke-width="1"/>
<rect x="610.5" y="728.5" width="58" height="16" fill="#fff" fill-opacity="0.15" stroke="#fff" stroke-opacity="0.35" stroke-width="1"/>
<path d="M12 737 L24 735 V744 H12 Z M26 734.5 L38 732 V744 H26 Z" fill="#fff"/>
<rect x="66" y="733" width="30" height="11" fill="#0a8a1a"/><path d="M74 744 V739 H88 V744 Z" fill="#fff"/><circle cx="81" cy="738" r="3" fill="none" stroke="#fff" stroke-width="1.5"/>
<path d="M128 735 L146 732 V744 H128 Z" fill="#2b579a"/><rect x="144" y="735" width="14" height="9" fill="#fff"/><path d="M146 738 H156 M146 741 H156" stroke="#2b579a" stroke-width="1"/>
<circle cx="205" cy="747" r="12.5" fill="#f4c20d"/><path d="M193.5 744 A12.5 12.5 0 0 1 216.5 744 L205 747 Z" fill="#dd4b39"/><path d="M192.5 747 A12.5 12.5 0 0 1 194 741 L205 747 Z" fill="#0f9d58"/><circle cx="205" cy="747" r="5" fill="#4a8af4" stroke="#fff" stroke-width="2"/>
<path d="M253 744 L256 733 H274 L280 744 Z" fill="#8ec0f0"/><path d="M262 744 Q266 736 272 744" fill="#fff"/>
<path d="M313 744 L315 733 H335 L342 744 Z" fill="#f8f8f8"/><text x="322" y="746" font-size="14" fill="#e02020" font-weight="bold">Я</text>
<circle cx="390" cy="746" r="13" fill="#f0f0f0"/><path d="M378 738 L388 744 L402 734" stroke="#e02020" stroke-width="5" fill="none"/>
<circle cx="452" cy="746" r="13" fill="#1aa0e8"/><text x="447" y="746" font-size="12" fill="#fff" font-weight="bold">S</text>
<rect x="500" y="733" width="16" height="11" fill="#c8dcf4" stroke="#5a88c8" stroke-width="1"/><rect x="505" y="737" width="20" height="7" fill="#e8f0fa" stroke="#5a88c8" stroke-width="1"/><circle cx="503" cy="743" r="2.5" fill="#e08020"/>
<circle cx="577" cy="750" r="15" fill="#b02418"/><path d="M580 738 A12 12 0 0 1 590 745" stroke="#f0a0a0" stroke-width="2" fill="none"/>
<circle cx="639" cy="748" r="14" fill="#f08828"/><path d="M628 740 H650 L646 744 H632 Z" fill="#fff" fill-opacity="0.8"/>
<text x="1308" y="747" font-size="15" fill="#fff" textLength="26" lengthAdjust="spacingAndGlyphs">11:37</text>
<path d="M1159 744 l2.5 -3 l2.5 3" stroke="#f0f0f0" stroke-width="1.2" fill="none"/><rect x="1175" y="741" width="15" height="3" fill="#e8e8e8"/><rect x="1176" y="742" width="13" height="2" fill="#909090"/><rect x="1200" y="741" width="2" height="3" fill="#f0f0f0"/><rect x="1203" y="741" width="2" height="3" fill="#f0f0f0"/><path d="M1206 744 v-2 l2 -1 h5 l2 1 v2z" fill="#f0f0f0"/><rect x="1235" y="743" width="3" height="1" fill="#202020"/>
</svg>
</body></html>
